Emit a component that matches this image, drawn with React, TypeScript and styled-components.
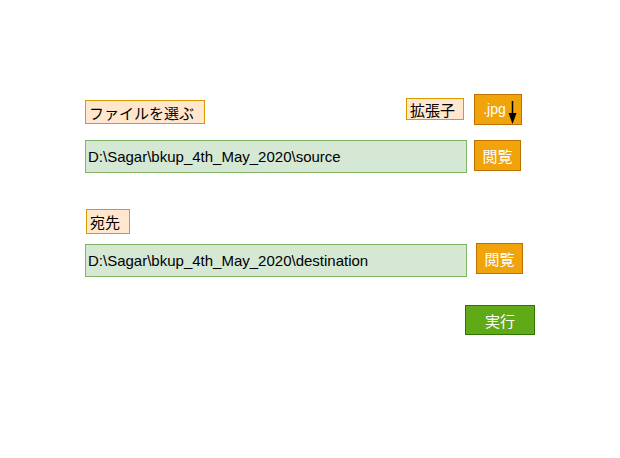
import React from "react";
import styled, { createGlobalStyle } from "styled-components";

const Global = createGlobalStyle`
  html, body { margin: 0; padding: 0; background: #ffffff; }
  body { font-family: "Liberation Sans", Arial, "Noto Sans CJK JP", sans-serif; }
`;

const Canvas = styled.div`
  width: 620px;
  height: 458px;
  box-sizing: border-box;
  padding: 94px 0 0 85px;
  display: flex;
  flex-direction: column;
  align-items: flex-start;
`;

const Row = styled.div<{ $top?: number; $width?: number }>`
  display: flex;
  align-items: flex-start;
  margin-top: ${(p) => p.$top ?? 0}px;
  width: ${(p) => (p.$width ? `${p.$width}px` : "auto")};
`;

const Tag = styled.div<{ $w: number; $h: number; $top?: number; $left?: number; $auto?: boolean }>`
  box-sizing: border-box;
  width: ${(p) => p.$w}px;
  height: ${(p) => p.$h}px;
  margin-top: ${(p) => p.$top ?? 0}px;
  margin-left: ${(p) => (p.$auto ? "auto" : `${p.$left ?? 0}px`)};
  background: #ffe6cc;
  border: 1.5px solid #d79b00;
  display: flex;
  align-items: center;
  padding-left: 3px;
  font-family: "Noto Sans CJK JP", sans-serif;
  font-size: 15px;
  color: #000;
  white-space: nowrap;
`;

const PathBox = styled.div<{ $top?: number }>`
  box-sizing: border-box;
  width: 382px;
  height: 33px;
  margin-top: ${(p) => p.$top ?? 0}px;
  background: #d5e8d4;
  border: 1.5px solid #82b366;
  display: flex;
  align-items: center;
  padding-left: 2px;
  font-family: "Liberation Sans", Arial, sans-serif;
  font-size: 15px;
  color: #000;
  white-space: nowrap;
`;

const OrangeButton = styled.div<{ $w: number; $h: number; $left: number; $top?: number }>`
  position: relative;
  box-sizing: border-box;
  width: ${(p) => p.$w}px;
  height: ${(p) => p.$h}px;
  margin-left: ${(p) => p.$left}px;
  margin-top: ${(p) => p.$top ?? 0}px;
  background: #f0a30a;
  border: 1.5px solid #bd7000;
  display: flex;
  align-items: center;
  justify-content: center;
  color: #ffffff;
  font-family: "Noto Sans CJK JP", sans-serif;
  font-size: 15px;
  white-space: nowrap;
`;

const JpgText = styled.span`
  font-family: "Liberation Sans", Arial, sans-serif;
  font-size: 14px;
  margin-left: -7px;
  margin-top: -2px;
`;

const Arrow = styled.svg`
  position: absolute;
  left: 33px;
  top: 6px;
  overflow: visible;
`;

const RunButton = styled.div`
  box-sizing: border-box;
  width: 70px;
  height: 30px;
  margin-left: 380px;
  margin-top: 28px;
  background: #60a917;
  border: 1.5px solid #2d7600;
  display: flex;
  align-items: center;
  justify-content: center;
  color: #ffffff;
  font-family: "Noto Sans CJK JP", sans-serif;
  font-size: 15px;
`;

export default function App() {
  return (
    <>
      <Global />
      <Canvas>
        <Row $width={437}>
          <Tag $w={120} $h={24} $top={6}>ファイルを選ぶ</Tag>
          <Tag $w={58} $h={22} $top={4} $auto>拡張子</Tag>
          <OrangeButton $w={48} $h={31} $left={10}>
            <JpgText>.jpg</JpgText>
            <Arrow width="9" height="23" viewBox="0 0 9 23">
              <line x1="4.5" y1="0" x2="4.5" y2="14" stroke="#000" strokeWidth="1.5" />
              <polygon points="0.5,12 8.5,12 4.5,23" fill="#000" />
            </Arrow>
          </OrangeButton>
        </Row>
        <Row $top={14}>
          <PathBox $top={1}>D:\Sagar\bkup_4th_May_2020\source</PathBox>
          <OrangeButton $w={47} $h={31} $left={7} $top={1}>閲覧</OrangeButton>
        </Row>
        <Tag $w={44} $h={25} $top={36} $left={1}>宛先</Tag>
        <Row $top={9}>
          <PathBox $top={1}>D:\Sagar\bkup_4th_May_2020\destination</PathBox>
          <OrangeButton $w={47} $h={31} $left={9}>閲覧</OrangeButton>
        </Row>
        <RunButton>実行</RunButton>
      </Canvas>
    </>
  );
}
